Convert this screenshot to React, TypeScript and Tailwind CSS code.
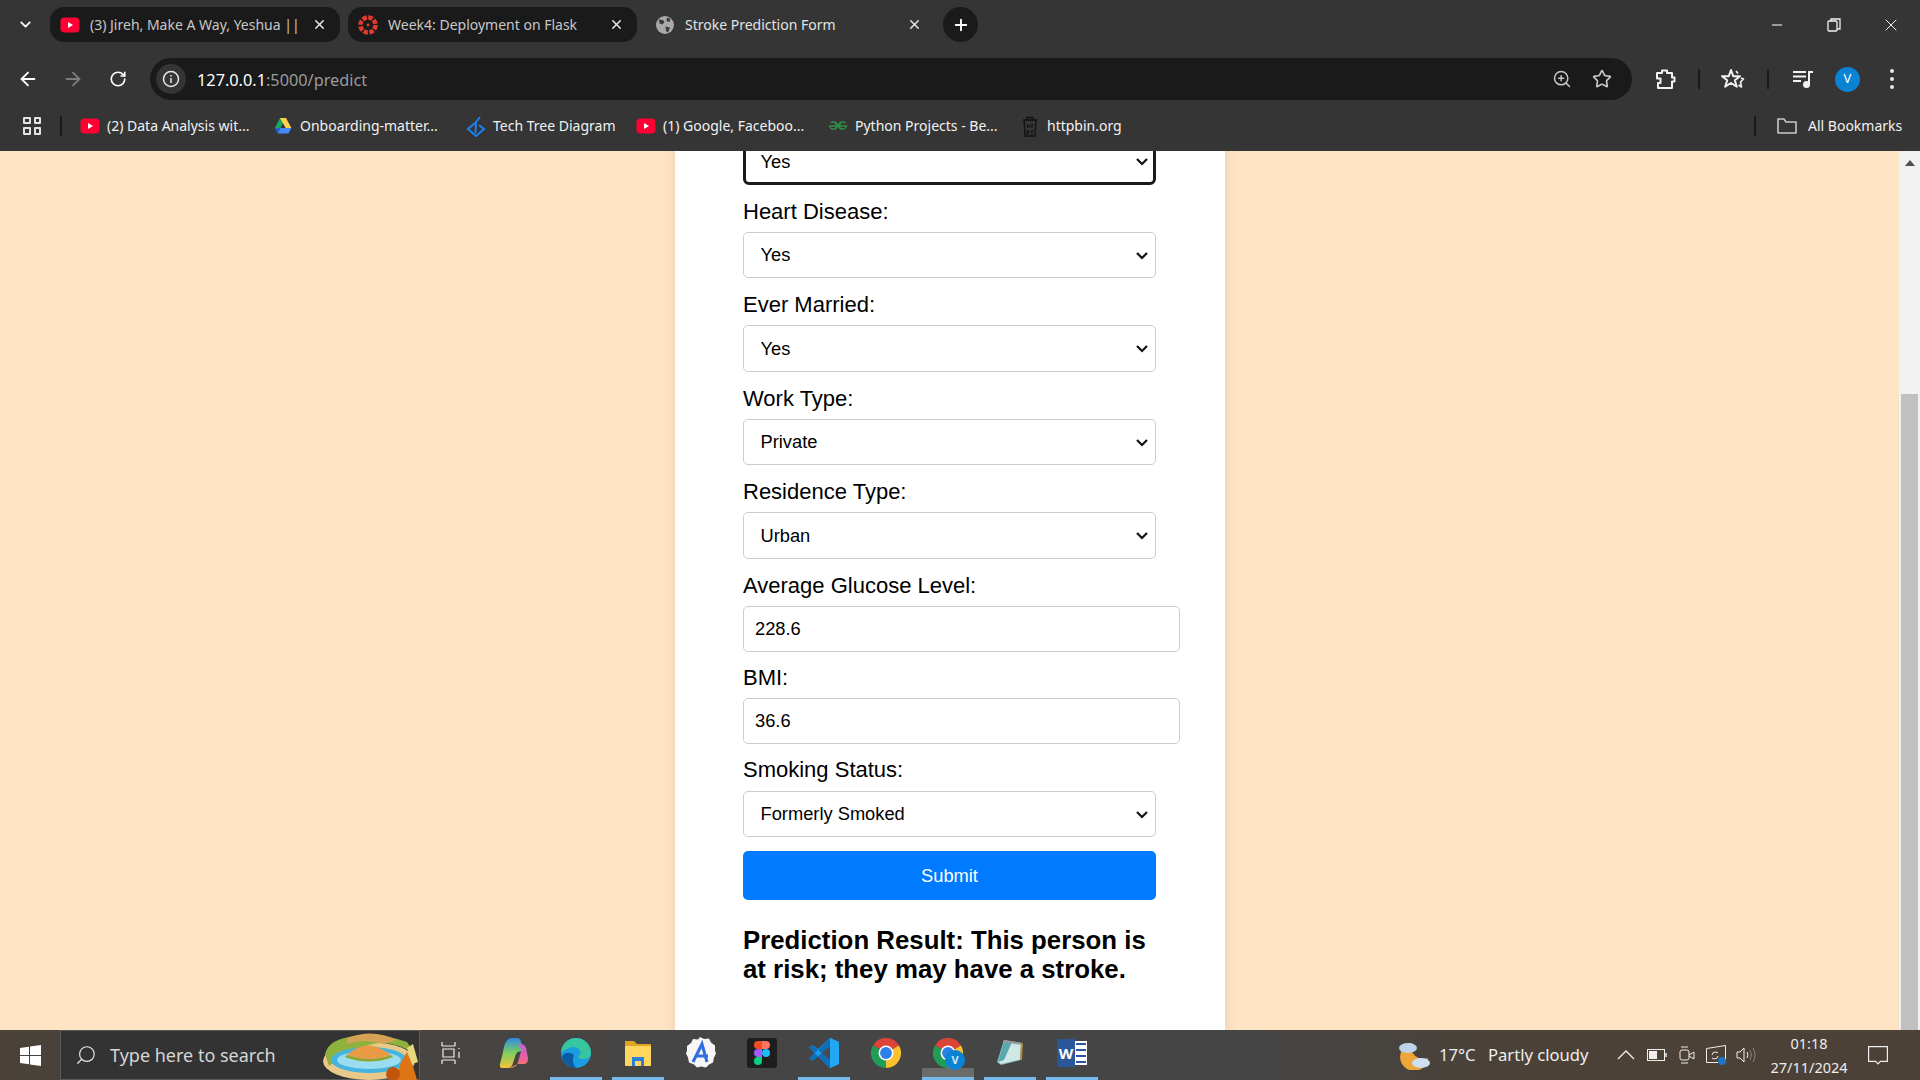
import React from 'react';
import { ArrowLeft, ArrowRight, ChevronDown, Minus, Plus, RotateCw, Search, Star, X, ZoomIn } from 'lucide-react';

const Youtube = () => (
  <svg width="20" height="20" viewBox="0 0 20 20" className="shrink-0">
    <rect x="0.5" y="2.5" width="19" height="15" rx="4" fill="#ff0033" />
    <path d="M8 7l5 3-5 3z" fill="#fff" />
  </svg>
);

const CanvasLogo = () => (
  <svg width="20" height="20" viewBox="0 0 20 20" className="shrink-0">
    <circle cx="10" cy="10" r="7.5" fill="none" stroke="#e23b2e" strokeWidth="4.5" strokeDasharray="4.4 1.5" />
    <circle cx="10" cy="10" r="1.4" fill="#e23b2e" />
  </svg>
);

const Globe = () => (
  <svg width="20" height="20" viewBox="0 0 20 20" className="shrink-0">
    <circle cx="10" cy="10" r="9" fill="#a9a9a9" />
    <path d="M4 4.5l4 .5 1.500 2-2 2.500-3-1zM12 2.500l3.500 1.500-1 3-3-1zM10.500 11.500l4.500 1-2 5-2-1.500z" fill="#3a3a3a" />
  </svg>
);

const DriveIcon = () => (
  <svg width="18" height="18" viewBox="0 0 18 18" className="shrink-0">
    <path d="M6 1h6L6.500 11H.8z" fill="#1fa463" />
    <path d="M12 1l5.400 10h-5.700L6 1z" fill="#ffd04b" />
    <path d="M3.600 16.500L6.500 11h10.900l-2.800 5.500z" fill="#4688f4" />
    <path d="M.8 11h5.700l-2.900 5.500z" fill="#1967d2" />
  </svg>
);

const TreeIcon = () => (
  <svg width="20" height="22" viewBox="0 0 20 22" className="shrink-0" fill="none" stroke="#1a82f0" strokeWidth="2">
    <path d="M9 8L2 14l8 7 8-7-5-4" />
    <path d="M9.500 18L10 7l4-5" />
  </svg>
);

const GfgIcon = () => (
  <svg width="20" height="20" viewBox="0 0 20 20" className="shrink-0" fill="none" stroke="#2f8d46" strokeWidth="1.4">
    <path d="M10 10H18.500a4 3.500 0 1 1-1.200-3M10 10H1.500a4 3.500 0 1 0 1.200-3" />
    <path d="M7 6.500Q10 10 7 13.500M13 6.500Q10 10 13 13.500" />
  </svg>
);

const HttpIcon = () => (
  <svg width="18" height="22" viewBox="0 0 18 22" className="shrink-0" fill="none" stroke="#111" strokeWidth="1.3">
    <path d="M2 5h14M6 5V2.500h6V5M3 5l1 16h10l1-16" />
    <path d="M6.500 9v4M6.500 11h2.500v2M11 8.500v4.500M10 10h2.500M6 15v5M6 16h2v2H6M11 15v4.500M10 16h2.500" strokeWidth="1" />
  </svg>
);

const Tab = ({ icon, title, active, width }: { icon: React.ReactNode; title: string; active?: boolean; width: string }) => (
  <div className={`flex h-[35px] items-center rounded-[14px] pl-[10px] ${width} ${active ? 'bg-[#1a1a1a]' : ''}`}>
    {icon}
    <span className={`ml-[10px] flex-1 text-[14px] whitespace-nowrap ${active ? 'text-[#c7c7c7]' : 'text-[#e3e3e3]'}`}>
      {title}
    </span>
    <X className="mr-[13px] ml-[8px] h-[15px] w-[15px] shrink-0 text-[#e3e3e3]" strokeWidth={2.5} />
  </div>
);

const TabBar = () => (
  <div className="flex h-[58px] items-start pt-[7px]">
    <div className="flex h-[35px] w-[50px] items-center justify-center">
      <ChevronDown className="h-[17px] w-[17px] text-white" strokeWidth={2.5} />
    </div>
    <Tab icon={<Youtube />} title="(3) Jireh, Make A Way, Yeshua ||" active width="w-[290px]" />
    <div className="w-2" />
    <Tab icon={<CanvasLogo />} title="Week4: Deployment on Flask" active width="w-[289px]" />
    <div className="w-[8px]" />
    <Tab icon={<Globe />} title="Stroke Prediction Form" width="w-[290px]" />
    <div className="ml-[8px] flex h-[35px] w-[35px] items-center justify-center rounded-full bg-[#1a1a1a]">
      <Plus className="h-[18px] w-[18px] text-white" strokeWidth={2.5} />
    </div>
    <div className="ml-auto flex h-[35px] items-center pr-[1px]">
      <div className="flex w-[57px] justify-center"><Minus className="h-[16px] w-[16px] text-white" strokeWidth={1.6} /></div>
      <div className="flex w-[57px] justify-center">
        <svg width="14" height="14" viewBox="0 0 14 14" fill="none" stroke="#f2f2f2" strokeWidth="1.3">
          <rect x="1" y="3" width="9" height="10" rx="1" />
          <path d="M4 3V1h9v10h-3" />
        </svg>
      </div>
      <div className="flex w-[57px] justify-center"><X className="h-[20px] w-[20px] text-[#f2f2f2]" strokeWidth={1.2} /></div>
    </div>
  </div>
);

const Toolbar = () => (
  <div className="flex h-[42px] items-center pl-[5px]">
    <div className="flex w-[45px] justify-center"><ArrowLeft className="h-[22px] w-[22px] text-white" strokeWidth={2} /></div>
    <div className="flex w-[45px] justify-center"><ArrowRight className="h-[22px] w-[22px] text-[#7d7d7d]" strokeWidth={2} /></div>
    <div className="flex w-[45px] justify-center"><RotateCw className="h-[18px] w-[18px] text-white" strokeWidth={2.2} /></div>
    <div className="ml-[10px] flex h-[42px] w-[1482px] items-center rounded-full bg-[#1a1a1a] pl-[6px]">
      <div className="flex h-[30px] w-[30px] items-center justify-center rounded-full bg-[#353535]">
        <svg width="18" height="18" viewBox="0 0 18 18" fill="none" stroke="#e8e8e8" strokeWidth="1.5">
          <circle cx="9" cy="9" r="7.500" />
          <path d="M9 8v5M9 5v1.500" />
        </svg>
      </div>
      <div className="ml-[11px] pt-[2px] text-[16.3px] text-white">
        127.0.0.1<span className="text-[#9a9a9a]">:5000/predict</span>
      </div>
      <div className="ml-auto flex w-[40px] justify-center"><ZoomIn className="h-[20px] w-[20px] text-[#c7c7c7]" strokeWidth={1.8} /></div>
      <div className="mr-[10px] flex w-[40px] justify-center"><Star className="h-[20px] w-[20px] text-[#c7c7c7]" strokeWidth={2} /></div>
    </div>
    <div className="ml-[16px] flex w-[36px] justify-center">
      <svg width="22" height="24" viewBox="0 0 22 24" fill="none" stroke="#f2f2f2" strokeWidth="2" strokeLinejoin="round">
        <path d="M2 6h5V3.500h5V6h5v4.500h2.500v4H17V21H3v-5h2.500v-4.500H2z" />
      </svg>
    </div>
    <div className="ml-[14px] h-[20px] w-[2px] bg-[#1a1a1a]" />
    <div className="ml-[15px] flex w-[36px] justify-center">
      <svg width="24" height="24" viewBox="0 0 24 24" fill="none" stroke="#f2f2f2" strokeWidth="2" strokeLinejoin="round">
        <path d="M10 3l2.200 6.200H19l-5.200 4 2 6.500L10 16l-5.800 3.700 2-6.500-5.200-4h6.800z" />
        <path d="M15 4l2 2.500M20 11l2.500 1-3 3 1 5-3-2" strokeWidth="1.600" />
      </svg>
    </div>
    <div className="ml-[16px] h-[20px] w-[2px] bg-[#1a1a1a]" />
    <div className="ml-[16px] flex w-[36px] justify-center">
      <svg width="22" height="22" viewBox="0 0 22 22" fill="#f2f2f2">
        <rect x="1" y="3" width="13" height="2" />
        <rect x="1" y="7.500" width="13" height="2" />
        <rect x="1" y="12" width="8" height="2" />
        <rect x="16" y="3" width="2" height="13" />
        <rect x="16" y="3" width="5" height="2" />
        <circle cx="14.500" cy="16.500" r="3.500" />
      </svg>
    </div>
    <div className="ml-[14px] flex h-[25px] w-[25px] items-center justify-center rounded-full bg-[#0b83d4] text-[13px] text-white">V</div>
    <div className="ml-[22px] flex w-[20px] flex-col items-center gap-[4px]">
      <div className="h-[4px] w-[4px] rounded-full bg-[#e8e8e8]" />
      <div className="h-[4px] w-[4px] rounded-full bg-[#e8e8e8]" />
      <div className="h-[4px] w-[4px] rounded-full bg-[#e8e8e8]" />
    </div>
  </div>
);

const Bookmark = ({ icon, label, width }: { icon: React.ReactNode; label: string; width: string }) => (
  <div className="ml-[22px] flex items-center">
    <div className="flex w-[18px] justify-center">{icon}</div>
    <span className={`ml-[8px] text-[14px] whitespace-nowrap text-[#f2f2f2] ${width}`}>{label}</span>
  </div>
);

const BookmarksBar = () => (
  <div className="flex h-[51px] items-center pl-[23px]">
    <div className="grid h-[18px] w-[18px] grid-cols-2 gap-[3px]">
      <div className="rounded-[1px] border-2 border-[#e3e3e3]" />
      <div className="rounded-[1px] border-2 border-[#e3e3e3]" />
      <div className="rounded-[1px] border-2 border-[#e3e3e3]" />
      <div className="rounded-[1px] border-2 border-[#e3e3e3]" />
    </div>
    <div className="ml-[19px] h-[20px] w-[2px] bg-[#1a1a1a]" />
    <div className="-ml-[3px] flex items-center">
      <Bookmark icon={<Youtube />} label="(2) Data Analysis wit..." width="w-[145px]" />
      <Bookmark icon={<DriveIcon />} label="Onboarding-matter..." width="w-[145px]" />
      <Bookmark icon={<TreeIcon />} label="Tech Tree Diagram" width="w-[122px]" />
      <Bookmark icon={<Youtube />} label="(1) Google, Faceboo..." width="w-[144px]" />
      <Bookmark icon={<GfgIcon />} label="Python Projects - Be..." width="w-[144px]" />
      <Bookmark icon={<HttpIcon />} label="httpbin.org" width="w-[74px]" />
    </div>
    <div className="ml-auto flex items-center">
      <div className="h-[20px] w-[2px] bg-[#1a1a1a]" />
      <svg className="ml-[21px]" width="20" height="18" viewBox="0 0 20 18" fill="none" stroke="#c7c7c7" strokeWidth="1.6">
        <path d="M1 16V2h6l2 3h10v11z" strokeLinejoin="round" />
      </svg>
      <span className="mr-[18px] ml-[11px] w-[94px] text-[14px] whitespace-nowrap text-[#f2f2f2]">All Bookmarks</span>
    </div>
  </div>
);

const labelCls = 'block h-[25px] text-[22px] leading-[25px] text-black';

const SelectBox = ({ value, focused }: { value: string; focused?: boolean }) => (
  <div className="relative mb-[14px] w-[413px]">
    <select
      defaultValue={value}
      className={`block h-[46.5px] w-full appearance-none bg-white text-[18.3px] text-black ${
        focused ? 'rounded-[6px] border-[3px] border-[#1a1a1a] pl-[14.5px]' : 'rounded-[5px] border border-[#ccc] pl-[16.5px]'
      }`}
    >
      <option>{value}</option>
    </select>
    <svg className="pointer-events-none absolute top-1/2 right-[8px] -mt-[3px]" width="12" height="8" viewBox="0 0 12 8" fill="none" stroke="#111" strokeWidth="2.2">
      <path d="M1 1l5 5 5-5" />
    </svg>
  </div>
);

const SelectField = ({ label, value }: { label: string; value: string }) => (
  <>
    <label className={`${labelCls} mb-[8px]`}>{label}</label>
    <SelectBox value={value} />
  </>
);

const InputField = ({ label, value }: { label: string; value: string }) => (
  <>
    <label className={`${labelCls} mb-[8.5px]`}>{label}</label>
    <input className="mb-[13px] block h-[45.5px] w-[437px] rounded-[5px] border border-[#ccc] bg-white pl-[11px] text-[18.3px] text-black" defaultValue={value} />
  </>
);

const StrokeForm = () => (
  <div className="ml-[675px] h-[940px] w-[550px] shrink-0 bg-white pl-[68px] shadow-[0_0_12px_rgba(0,0,0,0.1)]">
    <div className="-mt-[13px] font-['Liberation_Sans',Arial,sans-serif]">
      <SelectBox value="Yes" focused />
      <SelectField label="Heart Disease:" value="Yes" />
      <SelectField label="Ever Married:" value="Yes" />
      <SelectField label="Work Type:" value="Private" />
      <SelectField label="Residence Type:" value="Urban" />
      <InputField label="Average Glucose Level:" value="228.6" />
      <InputField label="BMI:" value="36.6" />
      <label className={`${labelCls} mt-[1px] mb-[9px]`}>Smoking Status:</label>
      <SelectBox value="Formerly Smoked" />
      <button className="mt-[1px] block h-[49px] w-[413px] rounded-[5px] bg-[#007bff] text-[18.3px] text-white">Submit</button>
      <p className="mt-[25.5px] w-[413px] text-[25.8px] leading-[29.5px] font-bold text-black">
        Prediction Result: This person is at risk; they may have a stroke.
      </p>
    </div>
  </div>
);

const ScrollBar = () => (
  <div className="flex w-[21px] shrink-0 flex-col items-center bg-[#f1f1f1]">
    <div className="mt-[9px] h-0 w-0 border-x-[5px] border-b-[6px] border-x-transparent border-b-[#505050]" />
    <div className="mt-auto h-[636px] w-[17px] bg-[#c0c0c0]" />
  </div>
);

const Island = () => (
  <svg width="96" height="50" viewBox="0 0 96 50" className="shrink-0">
    <ellipse cx="46" cy="31" rx="46" ry="19" fill="#e8c98a" />
    <path d="M2 24Q6 8 34 6T84 12L92 24Q70 10 50 14T6 36z" fill="#8fb23e" />
    <path d="M24 8Q50 -2 74 10L60 14Q40 8 24 14z" fill="#d6a356" />
    <ellipse cx="46" cy="30" rx="38" ry="13" fill="#45b4de" />
    <ellipse cx="46" cy="30" rx="32" ry="9" fill="#9adcf0" />
    <path d="M24 25Q44 6 68 25Q46 33 24 25z" fill="#e89a45" />
    <path d="M24 25Q46 33 68 25L70 27Q46 36 22 27z" fill="#8fa52e" />
    <path d="M72 50L78 32L84 22L90 36L94 50z" fill="#de7416" />
    <circle cx="70" cy="44" r="7" fill="#c0560e" />
    <path d="M84 18l6-4 5 18-6 2z" fill="#e6d77a" />
  </svg>
);

const Chrome = () => (
  <svg width="30" height="30" viewBox="0 0 48 48">
    <path d="M24 24L3.200 12A24 24 0 0 1 44.800 12z" fill="#db4437" />
    <path d="M24 24L44.800 12A24 24 0 0 1 24 48z" fill="#fbc02d" />
    <path d="M24 24L24 48A24 24 0 0 1 3.200 12z" fill="#1f9d55" />
    <circle cx="24" cy="24" r="12" fill="#fff" />
    <circle cx="24" cy="24" r="9.500" fill="#2f7fe8" />
  </svg>
);

const Slot = ({ children, open, hover, width = 'w-[62px]' }: { children: React.ReactNode; open?: boolean; hover?: boolean; width?: string }) => (
  <div className={`relative flex h-full items-center justify-center pb-[4px] ${width}`}>
    {hover && <div className="absolute right-[5px] bottom-0 left-[5px] h-[12px] bg-[#6b6b6b]" />}
    {open && <div className="absolute right-[5px] bottom-0 left-[5px] h-[3px] bg-[#76b9ed]" />}
    <div className="relative flex">{children}</div>
  </div>
);

const Taskbar = () => (
  <div className="flex h-[50px] shrink-0 items-stretch bg-[linear-gradient(90deg,#4a4239_0%,#454545_35%,#454545_65%,#4b4137_80%)] font-['Noto_Sans',sans-serif]">
    <div className="flex w-[60px] items-center justify-center">
      <svg width="21" height="21" viewBox="0 0 21 21" fill="#fff">
        <path d="M0 3l9-1.300V10H0zM10 1.500L21 0v10H10zM0 11h9v8.300L0 18zM10 11h11v10l-11-1.500z" />
      </svg>
    </div>
    <div className="flex w-[360px] items-center border border-[#5a5a5a] bg-[#333] pl-[14px]">
      <Search className="h-[22px] w-[22px] -scale-x-100 text-[#e8e8e8]" strokeWidth={1.3} />
      <span className="ml-[13px] text-[18px] text-[#d6d6d6]">Type here to search</span>
      <div className="ml-auto"><Island /></div>
    </div>
    <Slot width="w-[62px]">
      <svg width="20" height="22" viewBox="0 0 20 22" fill="none" stroke="#eee" strokeWidth="1.200">
        <path d="M1 4h13M1 0v4M14 0v4M1 18h13M1 22v-4M14 22v-4M2 7h11v8H2zM18 6v1M18 10v6" />
      </svg>
    </Slot>
    <div className="w-[1px]" />
    <Slot>
      <svg width="30" height="32" viewBox="0 0 30 32">
        <defs>
          <linearGradient id="cp1" x1="0" y1="0" x2="0" y2="1"><stop offset="0" stopColor="#2d8be6" /><stop offset="0.5" stopColor="#7ed05a" /><stop offset="1" stopColor="#f5c23c" /></linearGradient>
          <linearGradient id="cp2" x1="0" y1="0" x2="0" y2="1"><stop offset="0" stopColor="#c060d8" /><stop offset="0.6" stopColor="#e860a0" /><stop offset="1" stopColor="#f08a50" /></linearGradient>
        </defs>
        <path d="M13 1h5q3 0 4 4l3 10q-6-2-8 2l-3 9q-1 5-6 5H4Q0 31 1 27l3-12Q6 1 13 1z" fill="url(#cp1)" />
        <path d="M19 7q6-1 8 4l2 10q0 6-4 6h-6l-9 4q8 0 9-6l2-7q1-4 2-4z" fill="url(#cp2)" />
      </svg>
    </Slot>
    <Slot open>
      <svg width="30" height="30" viewBox="0 0 30 30">
        <circle cx="15" cy="15" r="15" fill="#1b9de2" />
        <path d="M0 15A15 15 0 0 1 30 15Q30 21 22 21Q16 21 17 18Q22 16 18 11Q12 7 6 11Q1 13 0 15z" fill="#37c6a0" />
        <path d="M3 24Q9 30 15 30Q10 24 13 17Q6 12 1 18Q1 21 3 24z" fill="#0c59a4" />
      </svg>
    </Slot>
    <Slot open>
      <svg width="28" height="28" viewBox="0 0 28 28">
        <path d="M1 2h9l3 3h14v6H1z" fill="#e0a526" />
        <rect x="1" y="7" width="26" height="20" rx="1" fill="#ffd75e" />
        <path d="M8 27v-9h12v9h-3v-5h-6v5z" fill="#2a7fd6" />
      </svg>
    </Slot>
    <Slot>
      <svg width="34" height="34" viewBox="0 0 34 34">
        <path d="M17 1l4 2 5-.500 2 4 4 3v5l1 3-2 4-1 5-4 2-3 3-5-1-4 1-3-3-5-2-1-5-2-4 1-3V10l4-3 2-4 5 .500z" fill="#f6f6f6" />
        <path d="M10 26L19 8l5 18M13 20h12" fill="none" stroke="#2f6fe0" strokeWidth="3" />
      </svg>
    </Slot>
    <Slot>
      <div className="flex h-[30px] w-[30px] items-center justify-center rounded-[3px] bg-[#1e1e1e]">
        <svg width="16" height="24" viewBox="0 0 16 24">
          <path d="M4 0h4v8H4a4 4 0 0 1 0-8z" fill="#f24e1e" />
          <path d="M8 0h4a4 4 0 0 1 0 8H8z" fill="#ff7262" />
          <path d="M4 8h4v8H4a4 4 0 0 1 0-8z" fill="#a259ff" />
          <circle cx="12" cy="12" r="4" fill="#1abcfe" />
          <path d="M4 16h4v4a4 4 0 1 1-4-4z" fill="#0acf83" />
        </svg>
      </div>
    </Slot>
    <Slot open>
      <svg width="30" height="30" viewBox="0 0 30 30">
        <path d="M21 0l9 4v22l-9 4-12-11.500-5.500 4L0 20.500 6 15 0 9.500 3.500 7 9 11z" fill="#1f9cf0" />
        <path d="M21 8L12 15l9 7z" fill="#4a4a4a" />
        <path d="M21 0v8L3.500 23 0 20.500zM21 30v-8L3.500 7 0 9.500z" fill="#0c6fb8" />
        <path d="M21 0l9 4v22l-9 4z" fill="#22a7f2" />
      </svg>
    </Slot>
    <Slot><Chrome /></Slot>
    <Slot open hover>
      <Chrome />
      <div className="absolute -right-[2px] -bottom-[2px] flex h-[20px] w-[20px] items-center justify-center rounded-full bg-[#0b83d4] text-[11px] font-bold text-[#cfe8fa]">V</div>
    </Slot>
    <Slot open>
      <svg width="28" height="28" viewBox="0 0 28 28">
        <path d="M8 1l18 3-1 17-20 5-4-3z" fill="#7fb7b8" />
        <path d="M8 2l17 2.500-1 16L5 25 2 23z" fill="#cfe8e6" />
        <path d="M8 2l8 1-8 18-6 2z" fill="#58a8ae" />
        <path d="M25 4l2 .500-1 17-2-1z" fill="#b08a3c" />
        <path d="M8 1l18 3-.500 2L7 3z" fill="#9a9a9a" />
      </svg>
    </Slot>
    <Slot open>
      <div className="flex">
        <div className="z-10 flex h-[28px] w-[18px] items-center justify-center bg-[#2b579a] text-[15px] font-bold text-white">W</div>
        <div className="flex h-[24px] w-[12px] flex-col justify-around self-center bg-white px-[1px]">
          <div className="h-[2px] bg-[#2b579a]" />
          <div className="h-[2px] bg-[#2b579a]" />
          <div className="h-[2px] bg-[#2b579a]" />
          <div className="h-[2px] bg-[#2b579a]" />
        </div>
      </div>
    </Slot>
    <div className="ml-auto flex items-center">
      <svg width="34" height="30" viewBox="0 0 34 30">
        <path d="M14 3A14 14 0 1 0 30 18 12 12 0 0 1 14 3z" fill="#eda63a" />
        <ellipse cx="10" cy="8" rx="9" ry="5" fill="#bcd3ea" />
        <ellipse cx="23" cy="23" rx="9" ry="5" fill="#cde0f2" />
      </svg>
      <span className="ml-[7px] w-[49px] text-[16.6px] text-[#eee]">17°C</span>
      <span className="w-[104px] text-[16.6px] whitespace-nowrap text-[#eee]">Partly cloudy</span>
      <div className="ml-[19px] flex w-[30px] justify-center">
        <svg width="18" height="10" viewBox="0 0 18 10" fill="none" stroke="#eee" strokeWidth="1.300"><path d="M1 9l8-8 8 8" /></svg>
      </div>
      <div className="flex w-[31px] justify-center">
        <svg width="20" height="12" viewBox="0 0 20 12" fill="none" stroke="#eee"><rect x="0.500" y="0.500" width="17" height="11" /><rect x="2" y="2" width="8" height="8" fill="#eee" stroke="none" /><path d="M19 4v4" strokeWidth="1.500" /></svg>
      </div>
      <div className="flex w-[29px] justify-center">
        <svg width="16" height="20" viewBox="0 0 16 20" fill="none" stroke="#eee"><rect x="1" y="5" width="9" height="10" rx="2" /><path d="M10 10l5-3v7l-5-3M2 2h7M2 18h7" /></svg>
      </div>
      <div className="flex w-[30px] justify-center">
        <svg width="20" height="20" viewBox="0 0 20 20" fill="none" stroke="#eee"><path d="M0.500 3.500L19.500 0.500V15M0.500 3.500V17.500H12" /><path d="M6 10q0-3 4-3l2 1M12 11q0 3-4 3l-2-1" /><circle cx="16" cy="16" r="4" fill="#1f74c9" stroke="none" /></svg>
      </div>
      <div className="flex w-[30px] justify-center">
        <svg width="20" height="16" viewBox="0 0 20 16" fill="none" stroke="#eee"><path d="M1 5h3l4-4v14l-4-4H1z" /><path d="M11 5q2 3 0 6" /><path d="M14 3q3 5 0 10M17 1q4 7 0 14" stroke="#8a857e" /></svg>
      </div>
      <div className="ml-[9px] flex w-[78px] flex-col items-center gap-[4px] text-[14.5px] leading-[20px] text-[#eee]">
        <span>01:18</span>
        <span className="whitespace-nowrap">27/11/2024</span>
      </div>
      <div className="ml-[19px] flex w-[53px] justify-end pr-[32px]">
        <svg width="20" height="19" viewBox="0 0 20 19" fill="none" stroke="#eee" strokeWidth="1.200"><path d="M.600.600h18.800v14.800h-7l-2.400 2.500-2.400-2.500h-7z" /></svg>
      </div>
    </div>
  </div>
);

export default function App() {
  return (
    <div className="flex h-screen w-screen flex-col overflow-hidden">
      <div className="h-[151px] shrink-0 bg-[#353535] font-['Noto_Sans',sans-serif]">
        <TabBar />
        <Toolbar />
        <BookmarksBar />
      </div>
      <div className="flex min-h-0 flex-1 overflow-hidden">
        <div className="min-w-0 flex-1 overflow-hidden bg-[#ffe4c4]">
          <StrokeForm />
        </div>
        <ScrollBar />
      </div>
      <Taskbar />
    </div>
  );
}
